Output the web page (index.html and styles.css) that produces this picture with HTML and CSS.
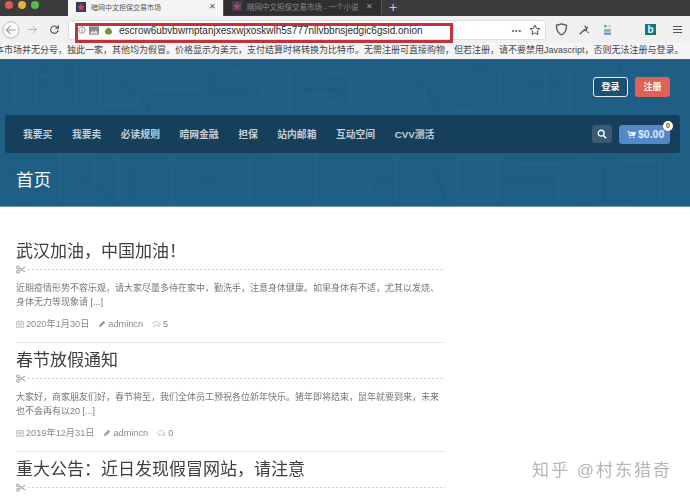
FILE: index.html
```html
<!DOCTYPE html>
<html lang="zh">
<head>
  <meta charset="UTF-8" />
  <title>暗网中文担保交易市场</title>
  <link rel="stylesheet" href="styles.css">
</head>
<body>
  <div class="page">
    <!-- browser chrome -->
    <div class="tabbar">
      <div class="lights"><i class="red"></i><i class="yellow"></i><i class="green"></i></div>
      <div class="tab active">
        <svg class="favicon" viewBox="0 0 12 12"><rect width="12" height="12" fill="#2d3a63"/><path d="M6 1l1.400 3.600L11 5 8 7.200 9 11 6 8.800 3 11l1-3.800L1 5l3.600-.4z" fill="#c2456a"/></svg>
        <span class="tab-title">暗网中文担保交易市场</span>
        <span class="tab-x">✕</span>
      </div>
      <div class="tab">
        <svg class="favicon" viewBox="0 0 12 12"><rect width="12" height="12" fill="#4a3a55"/><path d="M6 1l1.400 3.600L11 5 8 7.200 9 11 6 8.800 3 11l1-3.800L1 5l3.600-.4z" fill="#a8466c"/></svg>
        <span class="tab-title">暗网中文担保交易市场 - 一个小说</span>
        <span class="tab-x">✕</span>
      </div>
      <div class="tab-new">+</div>
    </div>

    <div class="toolbar">
      <div class="nav-btns">
        <svg class="back" viewBox="0 0 20 20"><circle cx="10" cy="10" r="9" fill="#fbfbfb" stroke="#b5b5b5"/><path d="M15 10H5M9.500 5.500L5 10l4.500 4.500" fill="none" stroke="#9c9c9c" stroke-width="1.300"/></svg>
        <svg class="fwd" viewBox="0 0 14 14"><path d="M1 7h11M7.500 2.500L12 7l-4.500 4.500" fill="none" stroke="#b4b4b4" stroke-width="1.200"/></svg>
        <svg class="reload" viewBox="0 0 14 14"><path d="M11.500 7.500a4.700 4.700 0 1 1-1.400-3.700L12 5.500M12 1.500v4H8" fill="none" stroke="#555" stroke-width="1.400"/></svg>
      </div>
      <div class="urlbar">
        <svg class="url-icon" viewBox="0 0 10 10"><circle cx="5" cy="5" r="4" fill="none" stroke="#777"/><path d="M5 4v3.500M5 2.300v1" stroke="#777"/></svg>
        <svg class="url-icon pic" viewBox="0 0 12 10"><rect width="12" height="10" fill="#8a8a8a"/><path d="M1 9l3-4 2 2 2-3 3 5z" fill="#dcdcdc"/></svg>
        <svg class="url-icon onion" viewBox="0 0 10 10"><path d="M5 1c.3 1.200 4 2.500 4 5.300C9 8.500 7.200 9.500 5 9.500S1 8.500 1 6.300C1 3.500 4.700 2.200 5 1z" fill="#6f9a38"/></svg>
        <span class="url-text">escrow6ubvbwrnptanjxesxwjxoskwlh5s777nllvbbnsjedgic6gsid.onion</span>
        <span class="url-dots">•••</span>
        <svg class="star" viewBox="0 0 14 14"><path d="M7 1.300l1.700 3.700 4 .5-3 2.700.8 4L7 10.300l-3.500 1.900.8-4-3-2.700 4-.5z" fill="none" stroke="#444" stroke-width="1.100"/></svg>
      </div>
      <div class="tools">
        <svg class="shield" viewBox="0 0 14 14"><path d="M7 1l5.500 1.500C12.500 8 11 11 7 13 3 11 1.500 8 1.500 2.500z" fill="none" stroke="#555" stroke-width="1.300"/></svg>
        <svg class="wand" viewBox="0 0 14 14"><path d="M2 12l6-6M8 2l1 2 2 .5-1.500 1.500.5 2-2-1-1.500 1" fill="none" stroke="#555" stroke-width="1.500"/><circle cx="12" cy="10" r=".9" fill="#555"/></svg>
        <svg class="ext" viewBox="0 0 10 14"><rect x="1" y="1" width="3" height="3" fill="#6fae8c"/><rect x="6" y="1" width="3" height="3" fill="#c5d6c5"/><rect x="1" y="6" width="8" height="3" fill="#7fa8d8"/><rect x="1" y="10" width="8" height="2.500" fill="#5b8fc9"/></svg>
        <div class="bing">b</div>
        <div class="burger"><i></i><i></i><i></i></div>
      </div>
    </div>

    <div class="notice">本市场并无分号，独此一家，其他均为假冒。价格显示为美元，支付结算时将转换为比特币。无需注册可直接购物，但若注册，请不要禁用Javascript，否则无法注册与登录。</div>

    <!-- site header -->
    <header class="hero">
      <svg class="hero-pattern" viewBox="0 0 690 148" preserveAspectRatio="none">
        <g fill="none" stroke="#2a6b92" stroke-width="3" opacity=".3">
          <path d="M14 8v40h22V16h20v38M76 6v44M100 12h36v34h-36zM150 30h50M176 8v46M230 10c20 0 34 10 34 30M290 8v48M320 14h30v30h-30zM380 8h44v44M448 10v42h30M500 12h46v36h-46zM570 8v44M600 16h40v30"/>
          <path d="M24 100v44M60 96h34v46H60zM118 98v46M148 104h48M172 96v50M216 100v40h34v-40M276 96h40v50M340 104c18 0 30 10 30 30M396 98v44h34M458 100h40v42h-40zM520 106h40v34M584 98v46M620 102h40v40"/>
        </g>
        <g fill="none" stroke="#1a5579" stroke-width="2" opacity=".35">
          <path d="M40 4h30v22H40zM120 24c20 10 30 20 30 34M210 6v30h40M304 30h40v26M404 18c20 4 30 16 34 34M468 6h20v26M530 26h34M620 4v34h40"/>
          <path d="M6 112h30v26M80 118c14 6 24 16 28 28M134 104v40M196 120h20v24M296 110v34M356 120h36M430 108c10 10 14 24 14 36M504 120h50v22M604 108v36h30"/>
        </g>
      </svg>
      <div class="auth">
        <a class="btn btn-login">登录</a>
        <a class="btn btn-reg">注册</a>
      </div>
      <nav class="mainnav">
        <ul class="menu">
          <li>我要买</li>
          <li>我要卖</li>
          <li>必读规则</li>
          <li>暗网金融</li>
          <li>担保</li>
          <li>站内邮箱</li>
          <li>互动空间</li>
          <li>CVV测活</li>
        </ul>
        <div class="nav-right">
          <div class="search-btn">
            <svg viewBox="0 0 12 12"><circle cx="5" cy="5" r="3.500" fill="none" stroke="#fff" stroke-width="1.600"/><path d="M7.700 7.700L11 11" stroke="#fff" stroke-width="1.800"/></svg>
          </div>
          <div class="cart">
            <svg viewBox="0 0 12 12"><path d="M0 1.500h2l1 6h7M2.500 3h9l-1 3.500H3z" fill="#fff" stroke="#fff" stroke-width=".7"/><circle cx="4" cy="10" r="1.100" fill="#fff"/><circle cx="9" cy="10" r="1.100" fill="#fff"/></svg>
            <span>$0.00</span>
            <b class="cart-count">0</b>
          </div>
        </div>
      </nav>
      <h1 class="page-title">首页</h1>
    </header>

    <main class="posts">
      <article class="post">
        <h2>武汉加油，中国加油！</h2>
        <div class="cut">
          <svg viewBox="0 0 12 10"><circle cx="2.300" cy="2.300" r="1.600" fill="none" stroke="#aaa" stroke-width="1.300"/><circle cx="2.300" cy="7.700" r="1.600" fill="none" stroke="#aaa" stroke-width="1.300"/><path d="M3.500 3.200L11 8M3.500 6.800L11 2" stroke="#aaa" stroke-width="1.300"/></svg>
        </div>
        <p>近期疫情形势不容乐观，请大家尽量多待在家中，勤洗手，注意身体健康。如果身体有不适，尤其以发烧、身体无力等现象请 [...]</p>
        <div class="meta">
          <span><svg viewBox="0 0 10 10"><path d="M.5 2h9v7.500h-9zM.5 4h9M3 .5v2M7 .5v2M2 5.500h6M2 7.500h6" fill="none" stroke="#aaa" stroke-width=".8"/></svg>2020年1月30日</span>
          <span><svg viewBox="0 0 10 10"><path d="M1 9l1-3 5-5 2 2-5 5z" fill="#999"/></svg>admincn</span>
          <span><svg class="wide" viewBox="0 0 12 10"><path d="M1 4.500C1 2.500 3 1.500 5 1.500s4 1 4 3-2 3-4 3l-2.500 1 .5-1.500C2 6.500 1 5.500 1 4.500z" fill="none" stroke="#aaa" stroke-width=".8"/><path d="M10 4c1 .8 1.300 2.500-.5 3.300l.5 1.500-2-1" fill="none" stroke="#aaa" stroke-width=".8"/></svg>5</span>
        </div>
      </article>
      <article class="post">
        <h2>春节放假通知</h2>
        <div class="cut">
          <svg viewBox="0 0 12 10"><circle cx="2.300" cy="2.300" r="1.600" fill="none" stroke="#aaa" stroke-width="1.300"/><circle cx="2.300" cy="7.700" r="1.600" fill="none" stroke="#aaa" stroke-width="1.300"/><path d="M3.500 3.200L11 8M3.500 6.800L11 2" stroke="#aaa" stroke-width="1.300"/></svg>
        </div>
        <p>大家好，商家朋友们好，春节将至，我们全体员工预祝各位新年快乐。猪年即将结束，鼠年就要到来，未来也不会再有以20 [...]</p>
        <div class="meta">
          <span><svg viewBox="0 0 10 10"><path d="M.5 2h9v7.500h-9zM.5 4h9M3 .5v2M7 .5v2M2 5.500h6M2 7.500h6" fill="none" stroke="#aaa" stroke-width=".8"/></svg>2019年12月31日</span>
          <span><svg viewBox="0 0 10 10"><path d="M1 9l1-3 5-5 2 2-5 5z" fill="#999"/></svg>admincn</span>
          <span><svg class="wide" viewBox="0 0 12 10"><path d="M1 4.500C1 2.500 3 1.500 5 1.500s4 1 4 3-2 3-4 3l-2.500 1 .5-1.500C2 6.500 1 5.500 1 4.500z" fill="none" stroke="#aaa" stroke-width=".8"/><path d="M10 4c1 .8 1.300 2.500-.5 3.300l.5 1.500-2-1" fill="none" stroke="#aaa" stroke-width=".8"/></svg>0</span>
        </div>
      </article>
      <article class="post">
        <h2>重大公告：近日发现假冒网站，请注意</h2>
        <div class="cut">
          <svg viewBox="0 0 12 10"><circle cx="2.300" cy="2.300" r="1.600" fill="none" stroke="#aaa" stroke-width="1.300"/><circle cx="2.300" cy="7.700" r="1.600" fill="none" stroke="#aaa" stroke-width="1.300"/><path d="M3.500 3.200L11 8M3.500 6.800L11 2" stroke="#aaa" stroke-width="1.300"/></svg>
        </div>
      </article>
    </main>

    <!-- annotation and watermark on top of the screenshot -->
    <div class="red-box"></div>
    <div class="watermark">知乎 @村东猎奇</div>
  </div>
</body>
</html>
```

FILE: styles.css
```css
* {
  margin: 0;
  padding: 0;
  box-sizing: border-box;
}

html, body {
  width: 690px;
  height: 497px;
  overflow: hidden;
  background: #fff;
}

body {
  font-family: "Liberation Sans", "Noto Sans CJK SC", sans-serif;
  color: #333;
}

.page {
  position: relative;
  width: 690px;
  height: 497px;
  overflow: hidden;
  filter: blur(0.5px);
}

/* tab strip */
.tabbar {
  display: flex;
  height: 16px;
  background: #3b3b3b;
}

.lights {
  display: flex;
  gap: 5px;
  width: 68px;
  padding: 1px 0 0 5px;
}

.lights i {
  width: 8px;
  height: 8px;
  border-radius: 50%;
}

.lights .red { background: #e0584f; }
.lights .yellow { background: #e3b23a; }
.lights .green { background: #5bb84c; }

.tab {
  display: flex;
  align-items: center;
  width: 158px;
  height: 15px;
  padding: 0 8px 3px 8px;
  color: #888;
  font-size: 7.500px;
  border-right: 1px solid #555;
}

.tab + .tab {
  background: #2f2f2f;
}

.tab.active {
  width: 156px;
  height: 16px;
  background: #f4f4f4;
  color: #555;
  font-size: 7px;
  padding-right: 7px;
}

.favicon {
  flex: none;
  width: 10px;
  height: 10px;
  margin-right: 5px;
}

.tab-title {
  flex: 1;
  white-space: nowrap;
}

.tab-x {
  font-size: 8px;
  color: #999;
}

.tab.active .tab-x {
  color: #555;
}

.tab-new {
  width: 26px;
  padding-left: 7px;
  color: #ccc;
  font-size: 14px;
  line-height: 15px;
}

/* toolbar */
.toolbar {
  display: flex;
  align-items: center;
  height: 27px;
  background: #f0f0f0;
  padding: 0 8px 0 2px;
}

.nav-btns {
  display: flex;
  align-items: center;
  width: 66px;
}

.back { width: 18px; height: 18px; }
.fwd { width: 11px; height: 11px; margin-left: 7px; }
.reload { width: 11px; height: 11px; margin-left: 11px; }

.urlbar {
  display: flex;
  align-items: center;
  width: 478px;
  height: 20px;
  margin-top: 1px;
  padding: 0 4px 0 9px;
  background: #fff;
  border: 1px solid #dcdcdc;
  border-radius: 3px;
}

.url-icon { width: 8px; height: 8px; }
.url-icon.pic { width: 10px; height: 9px; margin-left: 3px; }
.url-icon.onion { width: 9px; height: 9px; margin-left: 5px; }

.url-text {
  flex: 1;
  margin-left: 6px;
  font-size: 10px;
  color: #2a2a2a;
  white-space: nowrap;
}

.url-dots {
  font-size: 7px;
  color: #555;
  letter-spacing: 1px;
}

.star {
  width: 12px;
  height: 12px;
  margin-left: 7px;
}

.tools {
  flex: 1;
  display: flex;
  align-items: center;
  padding-left: 9px;
}

.shield { width: 13px; height: 13px; }
.wand { width: 12px; height: 12px; margin-left: 10px; }
.ext { width: 9px; height: 12px; margin-left: 13px; }

.bing {
  width: 11px;
  height: 11px;
  margin-left: 33px;
  background: #1f7078;
  color: #dff;
  font-size: 10px;
  font-weight: bold;
  line-height: 11px;
  text-align: center;
}

.burger {
  display: flex;
  flex-direction: column;
  gap: 2px;
  width: 9px;
  margin-left: 17px;
}

.burger i {
  height: 1px;
  background: #555;
}

/* scrolling notice */
.notice {
  height: 16px;
  margin-left: -5px;
  background: #f5f5f5;
  font-size: 9px;
  line-height: 15px;
  color: #444;
  white-space: nowrap;
  overflow: hidden;
}

/* hero */
.hero {
  position: relative;
  height: 148px;
  padding: 17px 10px 0 5px;
  background: #1f5f86;
  border-top: 1px solid #2a6a7e;
  border-bottom: 1px solid #6f9ab0;
}

.hero-pattern {
  position: absolute;
  left: 0;
  top: 0;
  width: 100%;
  height: 100%;
}

.auth {
  position: relative;
  display: flex;
  justify-content: flex-end;
  gap: 7px;
  padding-right: 10px;
  height: 20px;
}

.btn {
  display: block;
  width: 35px;
  height: 20px;
  border-radius: 3px;
  color: #fff;
  font-size: 9px;
  font-weight: bold;
  line-height: 18px;
  text-align: center;
}

.btn-login {
  background: #1c4f72;
  border: 1px solid #e6eef3;
}

.btn-reg {
  background: #de6354;
  line-height: 20px;
}

.mainnav {
  position: relative;
  display: flex;
  align-items: center;
  justify-content: space-between;
  height: 38px;
  margin-top: 18px;
  padding: 0 10px 0 18px;
  background: #163f5b;
  border-radius: 3px;
}

.menu {
  display: flex;
  gap: 19.500px;
  list-style: none;
  color: #c3d0d9;
  font-size: 9.800px;
  font-weight: bold;
}

.nav-right {
  display: flex;
  align-items: center;
  gap: 7px;
}

.search-btn {
  display: flex;
  align-items: center;
  justify-content: center;
  width: 20px;
  height: 18px;
  background: #3b5b72;
  border-radius: 3px;
}

.search-btn svg {
  width: 10px;
  height: 10px;
}

.cart {
  position: relative;
  display: flex;
  align-items: center;
  gap: 2px;
  width: 51px;
  height: 19px;
  padding-left: 8px;
  background: #5389c9;
  border-radius: 3px;
  color: #e0e9f5;
  font-size: 10.500px;
  font-weight: bold;
}

.cart svg {
  width: 9px;
  height: 9px;
}

.cart-count {
  position: absolute;
  top: -4px;
  right: -3px;
  width: 10px;
  height: 10px;
  border-radius: 50%;
  background: #fff;
  color: #5a5030;
  font-size: 7px;
  line-height: 10px;
  text-align: center;
}

.page-title {
  position: relative;
  margin: 15px 0 0 11px;
  color: #f2f6f8;
  font-size: 17.500px;
  font-weight: normal;
  line-height: 24px;
}

/* posts */
.posts {
  width: 445px;
  padding: 33px 0 0 16px;
}

.post {
  padding-bottom: 11px;
  margin-bottom: 6px;
  border-bottom: 1px solid #e8e8e8;
}

.post:last-child {
  border-bottom: 0;
}

.post h2 {
  font-size: 17px;
  font-weight: normal;
  line-height: 24px;
  color: #3f3f3f;
}

.cut {
  display: flex;
  align-items: center;
  height: 9px;
  margin-top: 1px;
  background: repeating-linear-gradient(to right, #d0d0d0 0 2px, transparent 2px 4px) 0 4px / 100% 1px no-repeat;
}

.cut svg {
  width: 11px;
  height: 9px;
  background: #fff;
  padding-right: 1px;
}

.post p {
  margin-top: 7px;
  font-size: 9px;
  line-height: 14px;
  color: #777;
}

.meta {
  display: flex;
  gap: 9px;
  margin-top: 8px;
  font-size: 9.200px;
  line-height: 14px;
  color: #888;
}

.meta span {
  display: flex;
  align-items: center;
  gap: 2px;
}

.meta svg {
  width: 8px;
  height: 8px;
}

.meta svg.wide {
  width: 9px;
}

/* added on top of the shot */
.red-box {
  position: absolute;
  left: 75px;
  top: 23px;
  width: 378px;
  height: 20px;
  border: 3px solid #c0333a;
}

.watermark {
  position: absolute;
  left: 532px;
  top: 456px;
  font-size: 17px;
  letter-spacing: 2px;
  color: #b5b5b5;
  white-space: nowrap;
}
```
